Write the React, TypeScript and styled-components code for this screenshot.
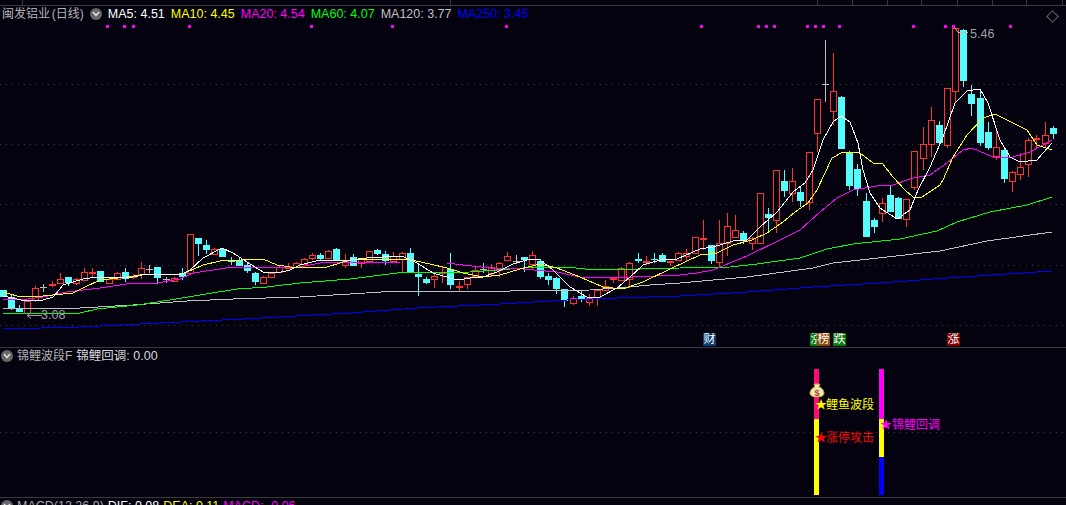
import React from "react"
import styled, { createGlobalStyle } from "styled-components"

const BG = "#03020e"
const CYAN = "#54fcfc"
const RED = "#ff3232"

// [bodyTop, bodyBottom, wickTop, wickBottom, kind] r = red, c = cyan, g = grey
type Candle = [number, number, number, number, string]
const candles: Candle[] = [
  [290, 297, 290, 297, "c"], [297, 308, 295, 310, "c"], [309, 312, 305, 312, "c"], [301, 313, 300, 314, "r"],
  [288, 300, 286, 302, "r"], [287, 288, 284, 292, "g"], [284, 285, 281, 287, "r"], [279, 283, 273, 283, "r"],
  [277, 283, 277, 286, "c"], [279, 283, 278, 285, "r"], [272, 280, 268, 281, "r"], [272, 273, 268, 277, "r"],
  [271, 282, 271, 282, "c"], [279, 283, 277, 284, "r"], [273, 279, 272, 280, "r"], [272, 279, 268, 282, "c"],
  [276, 277, 274, 279, "r"], [268, 274, 262, 279, "r"], [269, 270, 265, 273, "g"], [267, 278, 267, 284, "c"],
  [279, 280, 277, 283, "g"], [278, 281, 277, 282, "r"], [273, 277, 268, 280, "c"], [234, 273, 234, 273, "r"],
  [238, 244, 238, 256, "c"], [245, 250, 240, 254, "c"], [249, 254, 248, 255, "r"], [249, 257, 248, 257, "c"],
  [261, 262, 257, 265, "c"], [260, 266, 258, 266, "c"], [265, 271, 263, 273, "c"], [273, 282, 272, 285, "c"],
  [277, 283, 276, 284, "r"], [273, 277, 272, 278, "r"], [267, 272, 265, 273, "r"], [266, 268, 263, 269, "r"],
  [263, 267, 262, 268, "r"], [259, 264, 258, 265, "r"], [255, 258, 253, 260, "r"], [255, 259, 253, 261, "c"],
  [251, 258, 250, 259, "r"], [249, 261, 248, 261, "c"], [261, 265, 254, 268, "r"], [257, 266, 254, 266, "c"],
  [259, 263, 258, 268, "r"], [251, 261, 251, 262, "r"], [250, 254, 249, 255, "c"], [254, 261, 251, 265, "c"],
  [256, 261, 252, 262, "r"], [253, 259, 252, 273, "r"], [253, 273, 248, 273, "c"], [274, 277, 264, 296, "c"],
  [279, 283, 277, 284, "c"], [276, 279, 272, 288, "r"], [272, 273, 267, 283, "r"], [269, 285, 253, 289, "c"],
  [286, 287, 281, 291, "r"], [277, 284, 277, 289, "r"], [270, 276, 267, 277, "r"], [269, 270, 263, 273, "g"],
  [267, 273, 264, 277, "r"], [263, 270, 262, 277, "r"], [256, 260, 252, 261, "r"], [261, 262, 255, 264, "g"],
  [257, 260, 257, 272, "c"], [255, 264, 251, 270, "r"], [261, 277, 259, 279, "c"], [276, 280, 273, 285, "c"],
  [278, 289, 277, 294, "c"], [289, 301, 289, 307, "c"], [298, 303, 296, 305, "r"], [296, 299, 291, 302, "c"],
  [298, 302, 294, 306, "r"], [290, 297, 290, 306, "r"], [286, 290, 280, 291, "r"], [278, 279, 278, 283, "r"],
  [268, 280, 267, 281, "r"], [263, 279, 262, 288, "r"], [259, 261, 253, 263, "c"], [261, 262, 256, 265, "r"],
  [259, 260, 253, 263, "c"], [255, 262, 253, 262, "c"], [261, 262, 261, 266, "r"], [253, 260, 252, 261, "r"],
  [253, 256, 249, 262, "r"], [237, 253, 237, 253, "r"], [238, 239, 220, 250, "r"], [245, 261, 245, 264, "c"],
  [243, 262, 220, 268, "r"], [226, 243, 213, 256, "r"], [230, 237, 215, 238, "r"], [233, 240, 231, 244, "c"],
  [238, 243, 237, 250, "r"], [193, 243, 193, 244, "r"], [214, 218, 208, 233, "c"], [170, 220, 170, 233, "r"],
  [181, 191, 170, 197, "c"], [181, 193, 168, 202, "r"], [192, 201, 187, 207, "c"], [152, 202, 152, 210, "r"],
  [99, 133, 99, 152, "r"], [84, 85, 40, 102, "g"], [91, 111, 53, 125, "r"], [97, 149, 96, 149, "c"],
  [152, 186, 151, 190, "c"], [169, 189, 164, 196, "c"], [201, 237, 193, 237, "c"], [220, 227, 218, 233, "c"],
  [203, 213, 198, 222, "r"], [195, 212, 186, 212, "c"], [198, 219, 197, 219, "c"], [199, 219, 199, 227, "r"],
  [151, 187, 151, 190, "r"], [144, 158, 127, 170, "r"], [120, 144, 107, 157, "r"], [125, 143, 121, 146, "c"],
  [88, 145, 88, 148, "r"], [28, 91, 28, 103, "r"], [30, 81, 29, 87, "c"], [94, 104, 85, 116, "c"],
  [98, 143, 90, 146, "c"], [132, 148, 122, 150, "c"], [147, 156, 130, 160, "r"], [150, 179, 149, 183, "c"],
  [172, 181, 171, 192, "r"], [167, 174, 153, 180, "r"], [140, 164, 138, 177, "r"], [138, 139, 135, 148, "r"],
  [135, 143, 122, 148, "r"], [128, 134, 126, 139, "c"],
]

const ma5 = "3,296 26,301 43,300 53,297 60,289 63,285 83,279 97,277 133,277 147,274 180,275 190,270 203,258 222,248 233,253 247,262 263,272 277,273 290,270 300,265 320,260 350,260 367,258 383,257 402,256 417,263 433,273 450,278 458,280 470,278 483,277 497,272 513,264 530,259 540,260 553,270 570,287 587,297 600,297 617,288 630,277 643,265 660,260 677,259 700,249 713,247 733,241 747,240 760,227 777,212 793,192 805,183 813,170 823,140 833,122 841,116 850,122 858,143 863,170 870,193 880,208 897,219 910,210 918,190 930,167 943,137 955,103 967,91 980,89 988,103 1000,140 1010,157 1020,162 1037,160 1043,153 1052,143"
const ma10 = "3,292 17,296 27,296 43,296 73,293 83,288 100,280 127,277 147,274 177,275 187,272 203,265 220,261 263,259 277,265 297,268 327,267 350,260 383,259 407,259 430,264 447,268 463,273 483,277 500,275 520,269 540,264 557,268 580,277 603,287 623,289 643,282 670,269 700,255 717,253 733,245 752,240 767,233 783,222 795,212 808,203 817,190 832,158 843,152 860,153 873,163 882,163 893,177 905,190 913,197 922,197 940,185 943,180 953,157 967,135 983,118 995,114 1013,123 1027,130 1037,145 1052,150"
const ma20 = "3,299 20,300 43,297 67,292 100,288 133,283 157,283 180,279 193,273 213,270 233,267 273,267 300,267 320,263 350,262 400,263 447,263 463,265 490,268 523,269 557,272 580,277 600,278 633,277 680,275 697,273 713,270 747,256 780,240 800,230 820,212 837,198 853,190 877,186 893,185 913,178 930,175 947,163 963,150 972,148 993,157 1013,157 1030,152 1052,140"
const ma60 = "3,313 80,313 97,309 137,305 170,300 200,295 237,289 267,287 300,283 350,279 397,273 470,272 510,269 537,267 567,267 585,269 640,269 680,268 730,267 757,264 800,258 827,249 853,244 900,239 937,231 957,222 990,212 1027,205 1052,197"
const ma120 = "3,308 80,308 133,305 187,301 233,299 300,297 350,294 397,291 510,291 590,290 617,288 650,285 680,283 747,277 813,268 833,263 887,257 940,251 987,241 1052,232"
const ma250 = "3,329 80,327 160,323 243,319 350,313 417,308 500,304 567,300 617,298 680,296 747,292 813,287 880,283 947,278 1052,271"

const signalDots = [107, 124, 133, 189, 311, 392, 506, 701, 758, 766, 774, 807, 815, 823, 839, 913, 945, 953, 1010]
const ticks = [22, 450, 817, 852, 887, 921, 957, 992, 1026, 1062]
const gridLines = [84, 144, 204, 265, 325]

const maLines: [string, string][] = [
  [ma250, "#0000ff"],
  [ma120, "#c0c0c0"],
  [ma60, "#00ff00"],
  [ma20, "#ff00ff"],
  [ma10, "#ffff00"],
  [ma5, "#ffffff"],
]

const GlobalStyle = createGlobalStyle`
  html, body {
    margin: 0;
    height: 100%;
    background: ${BG};
    overflow: hidden;
  }
  body {
    font-family: "Liberation Sans", "Noto Sans CJK SC", sans-serif;
    font-size: 12.5px;
  }
`

const Page = styled.div`
  width: 1066px;
  height: 505px;
  display: flex;
  flex-direction: column;
  background: ${BG};
  overflow: hidden;
`

const TickStrip = styled.div`
  height: 5px;
  flex: none;
  position: relative;
  border-bottom: 1px solid #3a3a3a;
`

const Tick = styled.i<{ $x: number }>`
  position: absolute;
  top: 0;
  bottom: 0;
  left: ${p => p.$x}px;
  width: 1px;
  background: #3a3a3a;
`

const MainPanel = styled.section`
  height: 341px;
  flex: none;
  position: relative;
  border-bottom: 1px solid #3a3a3a;
`

const SubPanel = styled.section`
  height: 149px;
  flex: none;
  border-bottom: 1px solid #3a3a3a;
`

const Legend = styled.div<{ $gap: number; $pad: number }>`
  height: 16px;
  padding-left: ${p => p.$pad}px;
  display: flex;
  align-items: center;
  gap: ${p => p.$gap}px;
  white-space: nowrap;
  line-height: 16px;
`

const Name = styled.span`
  color: #b4b4b4;
  font-size: 12px;
  word-spacing: -1.5px;
`

const ToggleIcon = styled.span`
  width: 12px;
  height: 12px;
  flex: none;
  display: flex;
  align-items: center;
  justify-content: center;
  border-radius: 50%;
  background: #666;
`

const Value = styled.span<{ $color: string }>`
  color: ${p => p.$color};
`

const Diamond = styled.span`
  position: absolute;
  right: 9px;
  top: 6px;
  width: 7px;
  height: 7px;
  border: 1px solid #666;
  transform: rotate(45deg);
`

const PlotSvg = styled.svg`
  display: block;
`

const Tag = styled.span<{ $x: number; $bg: string }>`
  position: absolute;
  top: 327px;
  left: ${p => p.$x}px;
  width: 13px;
  height: 13px;
  background: ${p => p.$bg};
  color: #fff;
  font-size: 12px;
  line-height: 13px;
  text-align: center;
  overflow: hidden;
`

const Toggle = () => (
  <ToggleIcon>
    <svg width="8" height="6" viewBox="0 0 8 6">
      <path d="M1 1 L4 4.5 L7 1" fill="none" stroke="#e0e0e0" strokeWidth="1.6" />
    </svg>
  </ToggleIcon>
)

const CandleMark = ({ c, i }: { c: Candle; i: number }) => {
  const [top, bottom, wickTop, wickBottom, kind] = c
  const x = Math.round(2.7 + 8.14 * i)
  const color = kind === "c" ? CYAN : kind === "g" ? "#c0c0c0" : RED
  const cross = bottom - top <= 1
  return (
    <g shapeRendering="crispEdges">
      <rect x={x} y={wickTop} width={1} height={wickBottom - wickTop} fill={color} />
      {cross && <rect x={x - 3} y={top} width={7} height={kind === "r" ? 2 : 1} fill={color} />}
      {!cross && kind === "c" && <rect x={x - 3} y={top} width={7} height={bottom - top} fill={color} />}
      {!cross && kind !== "c" && (
        <rect x={x - 2.5} y={top + 0.5} width={6} height={bottom - top} fill={BG} stroke={color} />
      )}
    </g>
  )
}

const MoneyBag = () => (
  <g>
    <path d="M814 384 h6 l-1 3 c4 1 5 5 5 6 c0 3 -3 4 -7 4 c-4 0 -7 -1 -7 -4 c0 -1 1 -5 5 -6 z" fill="#f6e6b0" stroke="#c89a30" />
    <text x="817" y="395.5" fontSize="9" fontWeight="bold" fill="#a04a30" textAnchor="middle">$</text>
  </g>
)

const App: React.FC = () => (
  <Page>
    <GlobalStyle />
    <TickStrip>
      {ticks.map(x => (
        <Tick key={x} $x={x} />
      ))}
    </TickStrip>

    <MainPanel>
      <Legend $gap={6} $pad={2}>
        <Name>闽发铝业 (日线)</Name>
        <Toggle />
        <Value $color="#fff">MA5: 4.51</Value>
        <Value $color="#ffff00">MA10: 4.45</Value>
        <Value $color="#ff00ff">MA20: 4.54</Value>
        <Value $color="#00ff00">MA60: 4.07</Value>
        <Value $color="#c0c0c0">MA120: 3.77</Value>
        <Value $color="#0000ff">MA250: 3.45</Value>
      </Legend>
      <Diamond />
      <PlotSvg width={1066} height={325} viewBox="0 22 1066 325">
        {gridLines.map(y => (
          <line key={y} x1={0} x2={1066} y1={y + 0.5} y2={y + 0.5} stroke="#3c3c3c" strokeDasharray="1 5" />
        ))}
        {signalDots.map(x => (
          <rect key={x} x={x - 1} y={25} width={3} height={3} fill="#ff00ff" />
        ))}
        {candles.map((c, i) => (
          <CandleMark key={i} c={c} i={i} />
        ))}
        {maLines.map(([points, color]) => (
          <polyline key={color} points={points} fill="none" stroke={color} shapeRendering="crispEdges" />
        ))}
        <path d="M42 315.5 H28 M31 312.5 L27 315.5 L31 318.5" fill="none" stroke="#a0a0a0" />
        <text x="41" y="319" fontSize="12.5" fill="#a0a0a0">3.08</text>
        <path d="M955 28 L958 32.5 H968" fill="none" stroke="#c0c0c0" />
        <text x="970" y="38" fontSize="12.5" fill="#a0a0a0">5.46</text>
      </PlotSvg>
      <Tag $x={703} $bg="#0c3c70">财</Tag>
      <Tag $x={810} $bg="#0a7a0a">涨</Tag>
      <Tag $x={817} $bg="#8a4a10">榜</Tag>
      <Tag $x={833} $bg="#0a7a0a">跌</Tag>
      <Tag $x={947} $bg="#800000">涨</Tag>
    </MainPanel>

    <SubPanel>
      <Legend $gap={4} $pad={1}>
        <Toggle />
        <Name>锦鲤波段F</Name>
        <Value $color="#d8d8d8">锦鲤回调: 0.00</Value>
      </Legend>
      <PlotSvg width={1066} height={133} viewBox="0 364 1066 133">
        <line x1={0} x2={1066} y1={432.5} y2={432.5} stroke="#3c3c3c" strokeDasharray="1 5" />
        <g shapeRendering="crispEdges">
          <rect x={814} y={369} width={5} height={50} fill="#ff0a78" />
          <rect x={814} y={419} width={5} height={76} fill="#ffff00" />
          <rect x={879} y={369} width={5} height={50} fill="#ff00ff" />
          <rect x={879} y={419} width={5} height={38} fill="#ffff00" />
          <rect x={879} y={457} width={5} height={38} fill="#0000ff" />
        </g>
        <MoneyBag />
        <text x="815" y="409" fontSize="12" fill="#ffff00">★</text>
        <text x="826" y="409" fontSize="12" fill="#ffff00">鲤鱼波段</text>
        <text x="815" y="442" fontSize="12" fill="#ff0000">★</text>
        <text x="826" y="442" fontSize="12" fill="#ff0000">涨停攻击</text>
        <text x="880" y="429" fontSize="12" fill="#ff00ff">★</text>
        <text x="892" y="429" fontSize="12" fill="#ff00ff">锦鲤回调</text>
      </PlotSvg>
    </SubPanel>

    <Legend $gap={4} $pad={1}>
      <Toggle />
      <Value $color="#a8a8a8">MACD(12,26,9)</Value>
      <Value $color="#fff">DIF: 0.08</Value>
      <Value $color="#ffff00">DEA: 0.11</Value>
      <Value $color="#ff00ff">MACD: -0.06</Value>
    </Legend>
  </Page>
)

export default App
